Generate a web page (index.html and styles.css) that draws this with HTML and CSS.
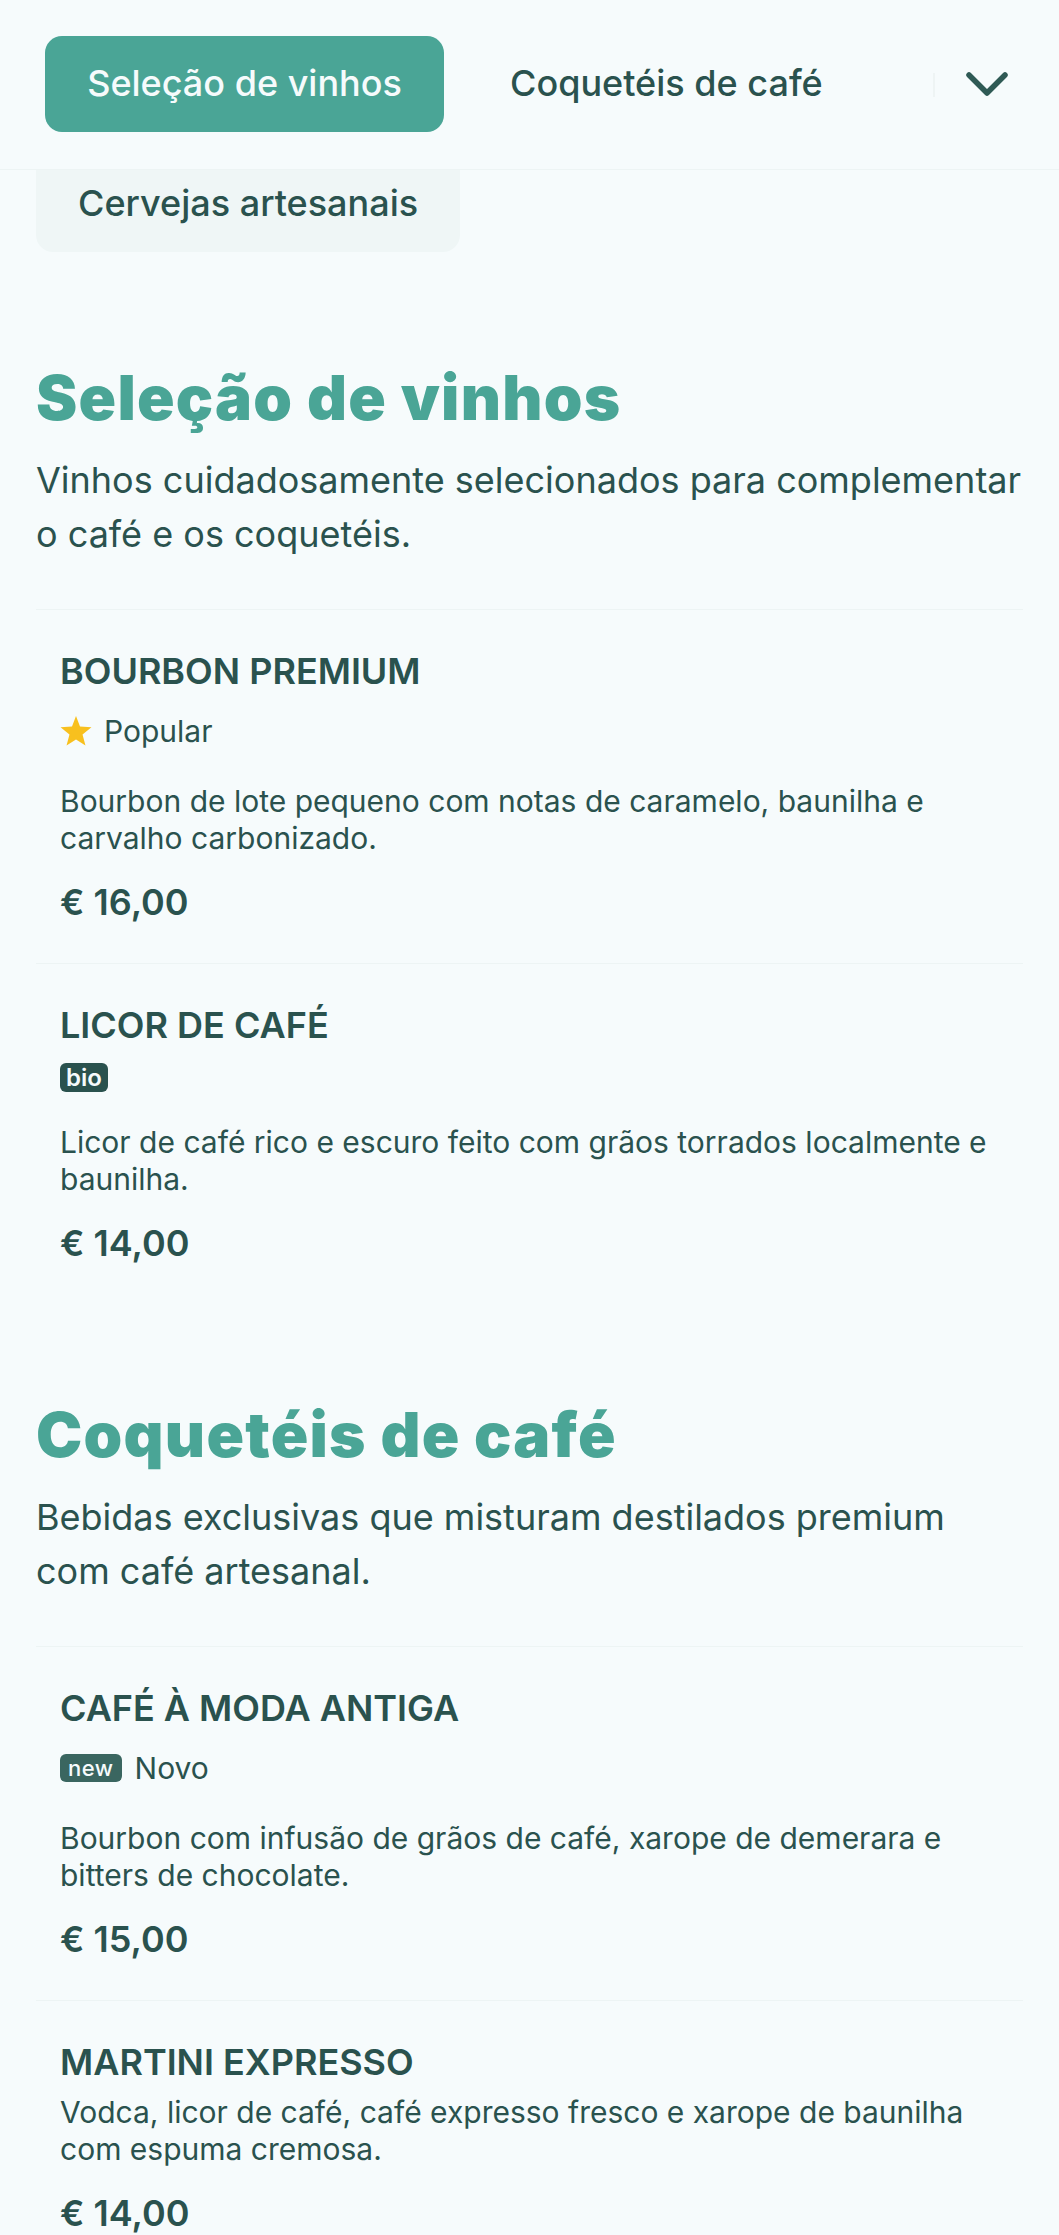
FILE: index.html
```html
<!DOCTYPE html>
<html lang="pt">
<head>
    <meta charset="UTF-8">
    <meta name="viewport" content="width=device-width, initial-scale=1.0">
    <title>Menu</title>
    <link rel="stylesheet" href="styles.css">
</head>
<body>

    <!-- Category nav -->
    <header class="topbar">
        <a class="tab tab-active">Seleção de vinhos</a>
        <a class="tab tab-plain">Coquetéis de café</a>
        <span class="fade-line"></span>
        <svg class="chevron" viewBox="0 0 44 28" width="44" height="28" fill="none">
            <path d="M4 5 L22 23 L40 5" stroke="#2f5a55" stroke-width="5.5" stroke-linecap="round" stroke-linejoin="round"/>
        </svg>
    </header>

    <div class="more-tabs">
        <a class="tab tab-muted">Cervejas artesanais</a>
    </div>

    <main>
        <section class="section section-first">
            <h2 class="section-title">Seleção de vinhos</h2>
            <p class="section-text">Vinhos cuidadosamente selecionados para complementar o café e os coquetéis.</p>

            <article class="item">
                <h3 class="item-name">BOURBON PREMIUM</h3>
                <div class="item-tags">
                    <svg class="star" viewBox="0 0 24 24" width="32" height="32">
                        <path d="M12 0.8 L15 8.7 L23.6 9.2 L16.9 14.6 L19.1 22.9 L12 18.3 L4.9 22.9 L7.1 14.6 L0.4 9.2 L9 8.7 Z" fill="#f8c01e"/>
                    </svg>
                    <span>Popular</span>
                </div>
                <p class="item-text">Bourbon de lote pequeno com notas de caramelo, baunilha e carvalho carbonizado.</p>
                <div class="item-price">€ 16,00</div>
            </article>

            <article class="item">
                <h3 class="item-name">LICOR DE CAFÉ</h3>
                <div class="item-tags item-tags-tight">
                    <span class="badge">bio</span>
                </div>
                <p class="item-text">Licor de café rico e escuro feito com grãos torrados localmente e baunilha.</p>
                <div class="item-price">€ 14,00</div>
            </article>
        </section>

        <section class="section">
            <h2 class="section-title">Coquetéis de café</h2>
            <p class="section-text">Bebidas exclusivas que misturam destilados premium com café artesanal.</p>

            <article class="item">
                <h3 class="item-name">CAFÉ À MODA ANTIGA</h3>
                <div class="item-tags">
                    <span class="badge badge-new">new</span>
                    <span>Novo</span>
                </div>
                <p class="item-text">Bourbon com infusão de grãos de café, xarope de demerara e bitters de chocolate.</p>
                <div class="item-price">€ 15,00</div>
            </article>

            <article class="item">
                <h3 class="item-name">MARTINI EXPRESSO</h3>
                <p class="item-text item-text-close">Vodca, licor de café, café expresso fresco e xarope de baunilha com espuma cremosa.</p>
                <div class="item-price">€ 14,00</div>
            </article>
        </section>
    </main>

</body>
</html>
```

FILE: styles.css
```css
* {
    box-sizing: border-box;
    margin: 0;
    padding: 0;
}

html, body {
    height: 100vh;
    overflow: hidden;
}

body {
    background-color: #f6fbfc;
    color: #2a524e;
    font-family: 'Inter', 'Liberation Sans', sans-serif;
}

/* Top nav */
.topbar {
    display: flex;
    align-items: center;
    height: 170px;
    padding: 0 50px 0 45px;
    border-bottom: 1px solid #edf4f4;
}

.tab {
    display: block;
    font-size: 36px;
    font-weight: 500;
    line-height: 48px;
}

.tab-active {
    width: 399px;
    height: 96px;
    padding: 23px 0;
    margin-top: -2px;
    text-align: center;
    background-color: #4aa596;
    color: #f6fbfc;
    border-radius: 17px;
}

.tab-plain {
    margin-left: 66px;
    margin-top: -3px;
}

.fade-line {
    width: 2px;
    height: 24px;
    margin-left: auto;
    margin-right: 30px;
    background-color: #eef4f4;
}

.chevron {
    margin-top: -2px;
}

.more-tabs {
    padding: 0 36px;
}

.tab-muted {
    width: 424px;
    height: 82px;
    padding: 9px 0 0 42px;
    background-color: #eff6f6;
    border-radius: 0 0 17px 17px;
}

/* Sections */
.section {
    padding: 0 36px;
    margin-top: 80px;
}

.section-first {
    margin-top: 0;
}

.section-title {
    font-family: 'Inter', sans-serif;
    font-size: 62px;
    font-weight: 900;
    letter-spacing: 1.25px;
    line-height: 70px;
    color: #4aa596;
    margin-top: 96px;
}

.section-first .section-title {
    margin-top: 111px;
}

.section-text {
    font-size: 36px;
    line-height: 54px;
    margin-top: 20px;
    padding-bottom: 48px;
}

.item {
    padding: 37px 24px 37px;
    border-top: 1px solid #edf4f4;
}

.item-name {
    font-size: 36px;
    font-weight: 600;
    line-height: 48px;
}

.item-tags {
    display: flex;
    align-items: center;
    gap: 12px;
    font-size: 30px;
    line-height: 40px;
    margin-top: 16px;
}

.item-tags-tight {
    margin-top: 14px;
    line-height: 37px;
}

.badge {
    display: inline-block;
    padding: 0 6px;
    font-size: 24px;
    font-weight: 600;
    line-height: 29px;
    background-color: #2a524e;
    color: #f6fbfc;
    border-radius: 6px;
}

.badge-new {
    background-color: #3a6660;
    font-size: 22px;
    font-weight: 500;
    letter-spacing: 0.5px;
    line-height: 28px;
    padding: 0 8px;
    margin-right: 1px;
}

.item-text {
    font-size: 30px;
    line-height: 36.5px;
    margin-top: 32px;
}

.item-text-close {
    margin-top: 8px;
}

.item-price {
    font-size: 36px;
    font-weight: 600;
    line-height: 48px;
    margin-top: 22px;
}
```
